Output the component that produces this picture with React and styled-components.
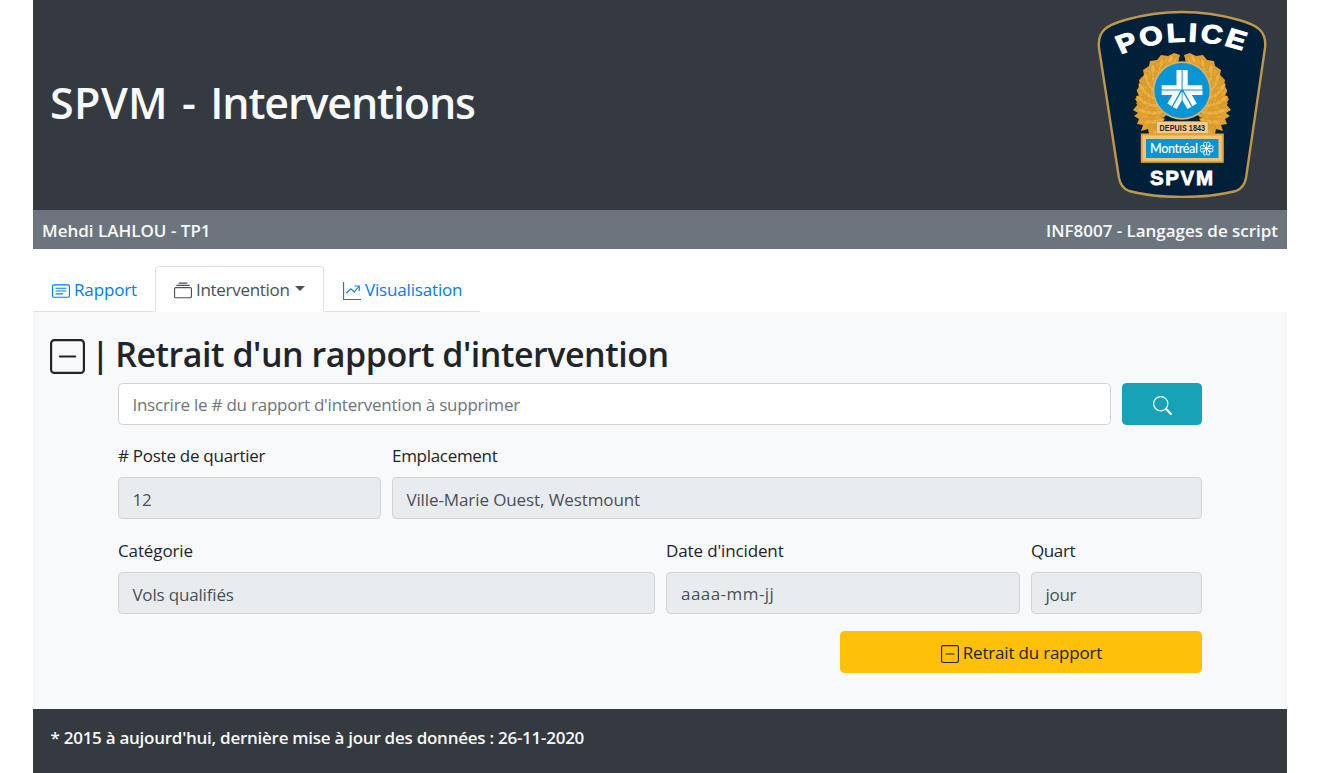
import React from "react";
import styled, { createGlobalStyle } from "styled-components";

const Global = createGlobalStyle`
  *, *::before, *::after { box-sizing: border-box; }
  body { margin: 0; background: #fff; color: #212529; font-family: "Open Sans", "Noto Sans", sans-serif; font-size: 17px; line-height: 26.4px; }
  h1, h2, p { margin: 0; }
`;

const Page = styled.div`
  width: 1254px;
  height: 773px;
  margin-left: 33px;
  display: flex;
  flex-direction: column;
  overflow: hidden;
`;

const Header = styled.header`
  height: 210px;
  flex: none;
  background: #343a40;
  display: flex;
  align-items: flex-start;
  justify-content: space-between;
  padding: 10px 20px 0 17px;
`;

const Title = styled.h1`
  color: #f8f9fa;
  font-size: 43px;
  font-weight: 600;
  line-height: 52px;
  padding-top: 67px;
`;

const SubBar = styled.div`
  height: 39px;
  flex: none;
  background: #6c757d;
  color: #f8f9fa;
  font-weight: 600;
  display: flex;
  justify-content: space-between;
  align-items: center;
  padding: 3px 9px 0;
`;

const Tabs = styled.nav`
  height: 63px;
  flex: none;
  display: flex;
  align-items: flex-end;
`;

const Tab = styled.a`
  width: ${(p) => p.$w}px;
  height: 46px;
  display: flex;
  align-items: center;
  gap: 4.5px;
  padding: 2px 0 0 17.5px;
  white-space: nowrap;
  color: ${(p) => (p.$active ? "#495057" : "#007bff")};
  border: 1px solid transparent;
  border-bottom-color: ${(p) => (p.$active ? "#f8f9fa" : "#dee2e6")};
  ${(p) => p.$active && "border-color: #dee2e6 #dee2e6 #fff; border-radius: 4px 4px 0 0;"}
  svg { position: relative; top: 1px; }
`;

const Caret = styled.span`
  border: 5.3px solid transparent;
  border-top-color: currentColor;
  border-bottom: 0;
  margin: 0 0 3px 1px;
`;

const Main = styled.main`
  height: 397px;
  flex: none;
  background: #f8f9fa;
  padding: 22px 85px 0;
`;

const Heading = styled.h2`
  display: flex;
  align-items: center;
  height: 42px;
  margin-left: -68px;
  padding-bottom: 2px;
  font-size: 34px;
  font-weight: 600;
  white-space: pre;
  svg { flex: none; margin: 4px 6px 0 0; }
`;

const Row = styled.div`
  display: grid;
  grid-template-columns: ${(p) => p.$cols};
  column-gap: 11px;
  margin-top: ${(p) => p.$top || 0}px;
`;

const Field = styled.label`
  display: flex;
  flex-direction: column;
  gap: 8px;
  line-height: 26px;
`;

const Control = styled.span`
  display: flex;
  align-items: center;
  height: 42px;
  padding: ${(p) => (p.$date ? "1px 14px 0" : "3px 13.4px 0")};
  border: 1px solid #ced4da;
  border-radius: 4.4px;
  background: ${(p) => (p.$open ? "#fff" : "#e9ecef")};
  color: ${(p) => (p.$open ? "#6c757d" : "#495057")};
`;

const Button = styled.button`
  display: flex;
  align-items: center;
  justify-content: center;
  gap: 4px;
  height: 42px;
  padding: 3px 0 0 1px;
  border: 1px solid ${(p) => p.$bg};
  border-radius: 4.4px;
  background: ${(p) => p.$bg};
  color: ${(p) => p.$fg};
  font: inherit;
`;

const Actions = styled.div`
  display: grid;
  grid-template-columns: 362px;
  justify-content: end;
  margin-top: 17px;
`;

const Footer = styled.footer`
  flex: 1;
  background: #343a40;
  color: #f8f9fa;
  font-weight: 600;
  padding: 16px 17.5px;
`;

const Text = styled.span`
  letter-spacing: ${(p) => p.$ls || 0}px;
  word-spacing: ${(p) => p.$ws || 0}px;
  white-space: pre;
`;

const Icon = ({ size = 18, children }) => (
  <svg width={size} height={size} viewBox="0 0 16 16" fill="currentColor">{children}</svg>
);

const DashSquare = ({ size }) => (
  <Icon size={size}>
    <path fillRule="evenodd" d="M14 1H2a1 1 0 0 0-1 1v12a1 1 0 0 0 1 1h12a1 1 0 0 0 1-1V2a1 1 0 0 0-1-1zM2 0a2 2 0 0 0-2 2v12a2 2 0 0 0 2 2h12a2 2 0 0 0 2-2V2a2 2 0 0 0-2-2H2z" />
    <path fillRule="evenodd" d="M4 8a.5.5 0 0 1 .5-.5h7a.5.5 0 0 1 0 1h-7A.5.5 0 0 1 4 8z" />
  </Icon>
);

const CardText = () => (
  <Icon>
    <path fillRule="evenodd" d="M14.5 3h-13a.5.5 0 0 0-.5.5v9a.5.5 0 0 0 .5.5h13a.5.5 0 0 0 .5-.5v-9a.5.5 0 0 0-.5-.5zm-13-1A1.5 1.5 0 0 0 0 3.5v9A1.5 1.5 0 0 0 1.5 14h13a1.5 1.5 0 0 0 1.5-1.5v-9A1.5 1.5 0 0 0 14.5 2h-13z" />
    <path fillRule="evenodd" d="M3 5.5a.5.5 0 0 1 .5-.5h9a.5.5 0 0 1 0 1h-9a.5.5 0 0 1-.5-.5zM3 8a.5.5 0 0 1 .5-.5h9a.5.5 0 0 1 0 1h-9A.5.5 0 0 1 3 8zm0 2.5a.5.5 0 0 1 .5-.5h6a.5.5 0 0 1 0 1h-6a.5.5 0 0 1-.5-.5z" />
  </Icon>
);

const Collection = () => (
  <Icon>
    <path fillRule="evenodd" d="M14.5 13.5h-13A.5.5 0 0 1 1 13V6a.5.5 0 0 1 .5-.5h13a.5.5 0 0 1 .5.5v7a.5.5 0 0 1-.5.5zm-13 1A1.5 1.5 0 0 1 0 13V6a1.5 1.5 0 0 1 1.5-1.5h13A1.5 1.5 0 0 1 16 6v7a1.5 1.5 0 0 1-1.5 1.5h-13zM2 3a.5.5 0 0 0 .5.5h11a.5.5 0 0 0 0-1h-11A.5.5 0 0 0 2 3zm2-2a.5.5 0 0 0 .5.5h7a.5.5 0 0 0 0-1h-7A.5.5 0 0 0 4 1z" />
  </Icon>
);

const GraphUp = () => (
  <Icon>
    <path d="M0 0h1v16H0V0zm1 15h15v1H1v-1z" />
    <path fillRule="evenodd" d="M14.39 4.312L10.041 9.75 7 6.707l-3.646 3.647-.708-.708L7 5.293 9.959 8.25l3.65-4.563.781.624z" />
    <path fillRule="evenodd" d="M10 3.5a.5.5 0 0 1 .5-.5h4a.5.5 0 0 1 .5.5v4a.5.5 0 0 1-1 0V4h-3.5a.5.5 0 0 1-.5-.5z" />
  </Icon>
);

const Search = () => (
  <Icon size={19}>
    <path fillRule="evenodd" d="M10.442 10.442a1 1 0 0 1 1.415 0l3.85 3.85a1 1 0 0 1-1.414 1.415l-3.85-3.85a1 1 0 0 1 0-1.415z" />
    <path fillRule="evenodd" d="M6.5 12a5.5 5.5 0 1 0 0-11 5.5 5.5 0 0 0 0 11zM13 6.5a6.5 6.5 0 1 1-13 0 6.5 6.5 0 0 1 13 0z" />
  </Icon>
);

const leaves = [];
[31, 34.5, 38, 41.5].forEach((r, ring) => {
  for (let i = 0; i < 17; i++) {
    const a = -78 + i * 8 + ring * 2.5;
    const t = (a * Math.PI) / 180;
    const s = Math.sin(t);
    const rr = r + ring * (s < 0 ? 2.4 * s : 1.9 * s);
    leaves.push({
      x: Math.cos(t) * rr,
      y: 92 + s * rr,
      r: a - 50 + 25 * Math.max(0, s),
      c: ["#dc9e2c", "#f0b037", "#e5a534", "#edb349"][(ring + i * 3) % 4],
    });
  }
});

const wreathHalf =
  "M2 55L8 53L14 56L21 55L25 60L32 61L33 66L39 70L38 75L43 80L42 85L45 90L43 95L47 99L44 104L49 110L44 113L48 116L43 119L45 124L39 125L41 131L34 129L33 134H20V62H4Z";

const Badge = () => (
  <svg width="170" height="188" viewBox="1097 10 170 188">
    <path d="M1099 48C1097 30 1108 25 1125 20Q1153 12 1182 12Q1211 12 1239 20C1257 25 1267 31 1265 48L1246 178Q1244 188 1236 191Q1212 197 1182 197Q1152 197 1129 191Q1121 188 1119 178Z" fill="#001f38" stroke="#bd974b" strokeWidth="2.4" />
    <g transform="translate(1183.5 0) scale(1.15 1)">
      <path id="police-arc" d="M-54.5 54.6A150 173 0 0 1 60 54.6" fill="none" />
      <text fill="#fff" stroke="#fff" strokeWidth="1.1" fontFamily="Liberation Sans, sans-serif" fontWeight="700" fontSize="26" letterSpacing="2.4">
        <textPath href="#police-arc">POLICE</textPath>
      </text>
    </g>
    {[1, -1].map((side) => (
      <g key={side} transform={`translate(1182 0) scale(${side} 1)`}>
        <path d={wreathHalf} fill="#dfa135" />
        {leaves.map((l, i) => (
          <path key={i} d="M-5 0Q0 -4.4 5 0Q0 4.4 -5 0Z" fill={l.c} stroke="#c98d2b" strokeWidth=".35" transform={`translate(${l.x} ${l.y}) rotate(${l.r})`} />
        ))}
      </g>
    ))}
    <circle cx="1182" cy="90.5" r="29.3" fill="#d9b164" />
    <circle cx="1182" cy="90.5" r="27.6" fill="#0795d6" />
    <g fill="#fff">
      <path d="M1176.5 70h5.1v19.6h-19.9v-4.3h14.8zM1187.7 70h-5.1v19.6h19.7v-4.3h-14.6z" />
      <path d="M1161.7 90.6H1180.6L1171.8 106.2L1167.4 103.6L1172.4 95H1161.7Z" />
      <path d="M1202.5 90.6H1183.6L1192.4 106.2L1196.8 103.6L1191.8 95H1202.5Z" />
      <path d="M1181.7 91.6V100.4L1176.8 109.1L1172.7 106.9ZM1182.5 91.6V100.4L1187.4 109.1L1191.5 106.9Z" />
    </g>
    <rect x="1156.6" y="121.4" width="51.6" height="12.4" fill="#f0cd90" stroke="#c9953c" strokeWidth=".7" />
    <text transform="translate(1182.3 130.6) scale(.86 1)" textAnchor="middle" fill="#26231f" fontFamily="Liberation Sans, sans-serif" fontWeight="700" fontSize="8.4" textLength="53">DEPUIS 1843</text>
    <rect x="1141.8" y="134.5" width="81" height="27.3" fill="#f2c477" stroke="#e9a42c" strokeWidth="2" />
    <rect x="1146" y="139" width="72.5" height="19" fill="#0795d6" />
    <text x="1150" y="153.3" fill="#fff" fontFamily="Lato, sans-serif" fontSize="12.5" fontWeight="600" textLength="48">Montréal</text>
    <g fill="none" stroke="#fff" strokeWidth="1">
      {[0, 90, 180, 270].map((a) => (
        <path key={a} transform={`translate(1206.7 148.7) rotate(${a})`} d="M0 0V-5.4M0 0L-3.6-3.6M-1.4-2.2C-5-4.6-2.4-8 0-5.4C2.4-8 5-4.6 1.4-2.2" />
      ))}
    </g>
    <text x="1181.5" y="185" textAnchor="middle" fill="#fff" stroke="#fff" strokeWidth=".8" fontFamily="Liberation Sans, sans-serif" fontWeight="700" fontSize="20.5" textLength="63">SPVM</text>
  </svg>
);

export default function App() {
  return (
    <>
      <Global />
      <Page>
        <Header>
          <Title><Text $ls={0.4} $ws={2.4}>SPVM - </Text><Text $ls={-1.13}>Interventions</Text></Title>
          <Badge />
        </Header>
        <SubBar>
          <Text>Mehdi LAHLOU - TP1</Text>
          <Text $ls={-0.03}>INF8007 - Langages de script</Text>
        </SubBar>
        <Tabs>
          <Tab $w={122}><CardText /><Text $ls={-0.15}>Rapport</Text></Tab>
          <Tab $w={169} $active><Collection /><Text $ls={-0.3}>Intervention</Text><Caret /></Tab>
          <Tab $w={157}><GraphUp /><Text $ls={-0.17}>Visualisation</Text></Tab>
        </Tabs>
        <Main>
          <Heading><DashSquare size={35} /><Text $ls={-1.7}>| </Text><Text $ls={-0.46}>Retrait d'un rapport d'intervention</Text></Heading>
          <Row $cols="993px 80px" $top={7}>
            <Control $open><Text $ls={-0.23}>Inscrire le # du rapport d'intervention à supprimer</Text></Control>
            <Button $bg="#17a2b8" $fg="#fff" aria-label="Rechercher"><Search /></Button>
          </Row>
          <Row $cols="263px 810px" $top={18}>
            <Field><Text $ls={-0.27}># Poste de quartier</Text><Control><Text>12</Text></Control></Field>
            <Field><Text $ls={-0.3}>Emplacement</Text><Control><Text $ls={-0.1}>Ville-Marie Ouest, Westmount</Text></Control></Field>
          </Row>
          <Row $cols="537px 354px 171px" $top={19}>
            <Field><Text $ls={-0.12}>Catégorie</Text><Control><Text $ls={-0.17}>Vols qualifiés</Text></Control></Field>
            <Field><Text $ls={-0.13}>Date d'incident</Text><Control $date><Text $ls={0.45}>aaaa-mm-jj</Text></Control></Field>
            <Field><Text $ls={-0.4}>Quart</Text><Control><Text $ls={-0.25}>jour</Text></Control></Field>
          </Row>
          <Actions>
            <Button $bg="#ffc107" $fg="#212529"><DashSquare size={18} /><Text $ls={-0.2}>Retrait du rapport</Text></Button>
          </Actions>
        </Main>
        <Footer><Text $ls={-0.26}>* 2015 à aujourd'hui, dernière mise à jour des données : 26-11-2020</Text></Footer>
      </Page>
    </>
  );
}
